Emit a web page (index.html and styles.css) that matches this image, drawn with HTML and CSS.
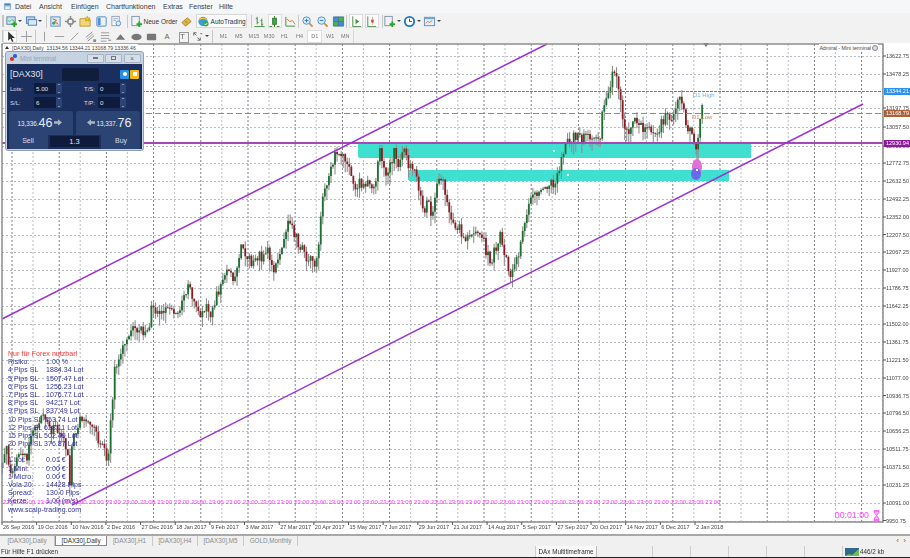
FILE: index.html
```html
<!DOCTYPE html>
<html lang="de">
<head>
<meta charset="utf-8">
<title>MetaTrader 4 - DAX30,Daily</title>
<link rel="stylesheet" href="styles.css">
</head>
<body>
<div class="app">
  <nav class="menu">
    <svg class="appicon" viewBox="0 0 10 10"><rect x="1" y="1" width="8" height="8" rx="1.5" fill="#8fb4dc"/><rect x="2.5" y="5" width="5" height="3" fill="#e8f0f8"/><rect x="2" y="2" width="6" height="1.5" fill="#4d7fb8"/></svg>
    <span class="m1">Datei</span><span class="m2">Ansicht</span><span class="m3">Einfügen</span><span class="m4">Chartfunktionen</span><span class="m5">Extras</span><span class="m6">Fenster</span><span class="m7">Hilfe</span>
  </nav>

  <div class="toolbar row1">
    <i class="grip"></i>
    <span class="ic"><svg viewBox="0 0 14 14"><rect x="2" y="2" width="9" height="8" fill="#cfe0f0" stroke="#5a82ad"/><path d="M3 6l2 1 2-2 3 1" stroke="#4b7" fill="none"/><path d="M9 7h2v2h2v2h-2v2H9v-2H7V9h2z" fill="#2da52d"/></svg></span><span class="dd"></span>
    <span class="ic"><svg viewBox="0 0 14 14"><rect x="1.500" y="2" width="9" height="7" fill="#bcd4ee" stroke="#4f7fb5"/><rect x="3.500" y="5" width="9" height="6" fill="#d9e7f6" stroke="#4f7fb5"/></svg></span><span class="dd"></span>
    <i class="sep sa"></i>
    <div class="grp">
      <span class="ic"><svg viewBox="0 0 14 14"><rect x="2" y="2" width="10" height="10" fill="#d7e9f7" stroke="#5d8fc0"/><path d="M4 4l4 2-2 1 4 3" stroke="#d8452a" fill="none"/><circle cx="5" cy="9" r="1.600" fill="#43a047"/></svg></span>
      <span class="ic"><svg viewBox="0 0 14 14"><circle cx="7" cy="7" r="3" fill="none" stroke="#8a8a8a" stroke-width="1.600"/><path d="M7 1v4M7 9v4M1 7h4M9 7h4" stroke="#8a8a8a" stroke-width="1.600"/></svg></span>
      <span class="ic"><svg viewBox="0 0 14 14"><path d="M1 4h5l1 1h5v7H1z" fill="#f2d77a" stroke="#b89a3a"/><path d="M9 1l1 2 2 .3-1.500 1.400.4 2.100L9 5.800 7.100 6.800l.4-2.100L6 3.300 8 3z" fill="#f4c020" stroke="#b08a20" stroke-width=".5"/></svg></span>
      <span class="ic"><svg viewBox="0 0 14 14"><rect x="2" y="2" width="10" height="10" rx="1" fill="#eaf2fa" stroke="#4f86c0"/><rect x="3" y="3" width="3" height="8" fill="#4f8fd0"/></svg></span>
      <span class="ic"><svg viewBox="0 0 14 14"><rect x="2" y="1.500" width="8" height="10" fill="#f5f7fa" stroke="#8da2b8"/><path d="M3.500 4h5M3.500 6h3" stroke="#9ab"/><circle cx="9" cy="9" r="2.500" fill="#dcecf8" stroke="#5d8fc0"/></svg></span>
    </div>
    <i class="sep sb"></i>
    <button class="tbtn neworder"><svg viewBox="0 0 14 14"><rect x="2" y="1.500" width="8" height="10" fill="#eef3f8" stroke="#7c93ab"/><path d="M9 7h2v2h2v2h-2v2H9v-2H7V9h2z" fill="#2da52d"/></svg><span>Neue Order</span></button>
    <span class="ic"><svg viewBox="0 0 14 14"><path d="M2 8l6-5 4 4-6 5z" fill="#e6b23a" stroke="#9c7420" stroke-width=".8"/><path d="M5 6l3 3" stroke="#a87d22"/></svg></span>
    <button class="tbtn auto"><svg viewBox="0 0 14 14"><circle cx="6.500" cy="7" r="5" fill="#3e9ad6"/><path d="M2.500 5c2-2 6-2 8 0" stroke="#f1c232" stroke-width="1.600" fill="none"/><circle cx="9.500" cy="9.500" r="3" fill="#34a853"/><path d="M8 9.500l1.200 1.200L11 8.700" stroke="#fff" fill="none"/></svg><span>AutoTrading</span></button>
    <i class="sep sc"></i>
    <div class="grp">
      <span class="ic"><svg viewBox="0 0 14 14"><path d="M4.500 2v8M3 4h1.500M4.500 8H6M9.500 4v8M8 6h1.500M9.500 10H11M1.500 12.500h11" stroke="#3f8a3f" fill="none"/></svg></span>
      <span class="ic on"><svg viewBox="0 0 14 14"><path d="M7 1v12" stroke="#2f7d2f"/><rect x="5" y="3.500" width="4" height="6.500" fill="#4aa84a" stroke="#2f7d2f"/><path d="M1.500 12.500h3M9.500 12.500h3" stroke="#2f7d2f"/></svg></span>
      <span class="ic"><svg viewBox="0 0 14 14"><path d="M2 2v10h10" stroke="#3f8a3f" fill="none"/><path d="M3 4l3 3 3-1 3 4" stroke="#c77a3a" fill="none"/></svg></span>
    </div>
    <i class="sep sd"></i>
    <div class="grp">
      <span class="ic"><svg viewBox="0 0 14 14"><circle cx="6" cy="6" r="4" fill="#d6ecfa" stroke="#4f8fc8"/><path d="M9 9l3.500 3.500" stroke="#c49a2e" stroke-width="2"/><path d="M4 6h4M6 4v4" stroke="#2f76b8"/></svg></span>
      <span class="ic"><svg viewBox="0 0 14 14"><circle cx="6" cy="6" r="4" fill="#d6ecfa" stroke="#4f8fc8"/><path d="M9 9l3.500 3.500" stroke="#c49a2e" stroke-width="2"/><path d="M4 6h4" stroke="#2f76b8"/></svg></span>
      <span class="ic"><svg viewBox="0 0 14 14"><rect x="1.500" y="2" width="5.500" height="5" fill="#3f8fd0"/><rect x="7" y="2" width="5.500" height="5" fill="#4caf50"/><rect x="1.500" y="7" width="5.500" height="5" fill="#4caf50"/><rect x="7" y="7" width="5.500" height="5" fill="#3f8fd0"/><path d="M1.500 2h11v10h-11zM1.500 7h11M7 2v10" stroke="#2e5e8c" stroke-width=".7" fill="none"/></svg></span>
    </div>
    <i class="sep se"></i>
    <div class="grp">
      <span class="ic on"><svg viewBox="0 0 14 14"><path d="M3 1.500v11h9" stroke="#3f8a3f" fill="none"/><path d="M6 4l4 3-4 3z" fill="#3f9a3f"/></svg></span>
      <span class="ic on"><svg viewBox="0 0 14 14"><path d="M3 1.500v11h9" stroke="#3f8a3f" fill="none"/><path d="M8 2.500v8" stroke="#d9534f" stroke-dasharray="1.500 1"/><rect x="6.500" y="5" width="3" height="3" fill="#d9534f"/></svg></span>
    </div>
    <i class="sep sf"></i>
    <span class="ic"><svg viewBox="0 0 14 14"><rect x="2" y="1.500" width="8" height="10" fill="#eef3f8" stroke="#7c93ab"/><path d="M9 7h2v2h2v2h-2v2H9v-2H7V9h2z" fill="#2da52d"/></svg></span><span class="dd"></span>
    <span class="ic"><svg viewBox="0 0 14 14"><circle cx="7" cy="7" r="5" fill="#fff" stroke="#1f78c8" stroke-width="2"/><path d="M7 4v3h2.500" stroke="#1a4f80" fill="none"/></svg></span><span class="dd"></span>
    <span class="ic"><svg viewBox="0 0 14 14"><rect x="1.500" y="2.500" width="11" height="9" fill="#e4eef8" stroke="#5d8fc0"/><rect x="1.500" y="2.500" width="11" height="2" fill="#6fa5d8"/><path d="M3 9l2-2 2 1 3-2" stroke="#d8703a" fill="none"/></svg></span><span class="dd"></span>
  </div>

  <div class="toolbar row2">
    <i class="grip"></i>
    <span class="ic on"><svg viewBox="0 0 14 14"><path d="M4.500 1.500v10l2.500-2.300 1.700 3.600 1.500-.7-1.700-3.500h3.300z" fill="#333"/></svg></span>
    <span class="ic"><svg viewBox="0 0 14 14"><path d="M7 1v12M1 7h12" stroke="#999"/></svg></span>
    <i class="sep sg"></i>
    <div class="grp">
      <span class="ic"><svg viewBox="0 0 14 14"><path d="M7 2v10" stroke="#999"/></svg></span>
      <span class="ic"><svg viewBox="0 0 14 14"><path d="M2 7h10" stroke="#999"/></svg></span>
      <span class="ic"><svg viewBox="0 0 14 14"><path d="M3 11l8-8" stroke="#999"/></svg></span>
      <span class="ic"><svg viewBox="0 0 14 14"><path d="M2 8l7-6M4 12l7-6" stroke="#888"/><path d="M3 10l7-6" stroke="#aaa"/><path d="M10 10h3v3h-3z" fill="#888"/></svg></span>
      <span class="ic"><svg viewBox="0 0 14 14"><path d="M2 3h9M2 6h9M2 9h9M2 12h6" stroke="#999"/><path d="M10 11h3" stroke="#777"/></svg></span>
      <span class="ic"><svg viewBox="0 0 14 14"><path d="M2 10.500L7 4.500l5 6z" fill="#777"/></svg></span>
      <span class="ic"><svg viewBox="0 0 14 14"><ellipse cx="7" cy="7.500" rx="5.500" ry="3.500" fill="#777"/></svg></span>
      <span class="ic"><svg viewBox="0 0 14 14"><rect x="2" y="4" width="10" height="7" rx="1" fill="#777"/></svg></span>
      <span class="ic txt">A</span>
      <span class="ic txt boxed">T</span>
      <span class="ic"><svg viewBox="0 0 14 14"><path d="M3 3l3 3M3 6V3h3" stroke="#666" fill="none"/><path d="M7 8l3 3M10 8v3H7" stroke="#666" fill="none"/><path d="M10 4h2" stroke="#666"/></svg></span>
    </div>
    <span class="dd"></span>
    <i class="sep sh"></i>
    <div class="tfs">
      <span>M1</span><span>M5</span><span>M15</span><span>M30</span><span>H1</span><span>H4</span><span class="tf-on">D1</span><span>W1</span><span>MN</span>
    </div>
  </div>

  <main class="chart">
    <svg id="plot" class="plot" viewBox="0 43 910 491" width="910" height="491"></svg>

    <div class="chart-title"><span class="tri"></span>[DAX30],Daily&nbsp; 13134.56 13344.21 13168.79 13336.46</div>
    <div class="chart-brand">Admiral - Mini terminal <span class="ring"></span></div>

    <section class="mini">
      <header class="mini-title">
        <span class="dots"><i class="dot-r"></i><i class="dot-b"></i></span>
        <span class="mini-name">Mini terminal</span>
        <span class="wbtn"><i class="w-min"></i></span><span class="wbtn"><i class="w-max"></i></span><span class="wbtn"><i class="w-x">×</i></span>
      </header>
      <div class="mini-body">
        <div class="mini-head">
          <span class="sym">[DAX30]</span>
          <span class="symbox"></span>
          <span class="sq sq-b"><i></i></span><span class="sq sq-y"><i></i></span>
        </div>
        <div class="fields">
          <label>Lots:</label><span class="inp">5.00</span><span class="stp"></span>
          <label class="l2">T/S:</label><span class="inp">0</span><span class="stp"></span>
          <label>S/L:</label><span class="inp">6</span><span class="stp"></span>
          <label class="l2">T/P:</label><span class="inp">0</span><span class="stp"></span>
        </div>
        <div class="trade">
          <div class="side sell">
            <div class="price"><small>13,336.</small><b>46</b><svg viewBox="0 0 10 8"><path d="M0 2.500h5V0l5 4-5 4V5.500H0z"/></svg></div>
            <div class="act">Sell</div>
          </div>
          <div class="side buy">
            <div class="price"><svg viewBox="0 0 10 8"><path d="M10 2.500H5V0L0 4l5 4V5.500h5z"/></svg><small>13,337.</small><b>76</b></div>
            <div class="act">Buy</div>
          </div>
          <div class="spread">1.3</div>
        </div>
      </div>
    </section>

    <div class="info">
      <p class="warn">Nur für Forex nutzbar!</p>
      <p><span>Risiko:</span>1.00 %</p>
      <p><span>4 Pips SL</span>1884.34 Lot</p>
      <p><span>5 Pips SL</span>1507.47 Lot</p>
      <p><span>6 Pips SL</span>1256.23 Lot</p>
      <p><span>7 Pips SL</span>1076.77 Lot</p>
      <p><span>8 Pips SL</span>942.17 Lot</p>
      <p><span>9 Pips SL</span>837.49 Lot</p>
      <p class="wide"><span>10 Pips SL</span>753.74 Lot</p>
      <p class="wide"><span>12 Pips SL</span>628.11 Lot</p>
      <p class="wide"><span>15 Pips SL</span>502.49 Lot</p>
      <p class="wide gapb"><span>20 Pips SL</span>376.87 Lot</p>
      <p><span>1 Lot:</span>0.01 €</p>
      <p><span>1 Mini:</span>0.00 €</p>
      <p><span>1 Micro:</span>0.00 €</p>
      <p><span>Vola 20:</span>14428 Pips</p>
      <p><span>Spread:</span>130.0 Pips</p>
      <p><span>Kerze:</span>1.00 (m/s)</p>
      <p class="url">www.scalp-trading.com</p>
    </div>

    <div class="timer">00:01:00<svg viewBox="0 0 8 12"><path d="M1 .5h6M1 11.500h6M1.500 1c0 3 2 4 2.500 5 .5 1 2.500 2 2.500 5h-5c0-3 2-4 2.500-5C4.500 5 6.500 4 6.500 1z" fill="#ffb4ff" stroke="#ff40ff"/></svg></div>
  </main>

  <div class="tabs">
    <span class="tab t1">[DAX30],Daily</span>
    <span class="tab t2 active">[DAX30],Daily</span>
    <span class="tab t3">[DAX30],H1</span>
    <span class="tab t4">[DAX30],H4</span>
    <span class="tab t5">[DAX30],M5</span>
    <span class="tab t6">GOLD,Monthly</span>
    <span class="arrows">‹&nbsp;&nbsp;›</span>
  </div>

  <footer class="status">
    <span class="s-help">Für Hilfe F1 drücken</span>
    <span class="s-cell s-name">DAx Multitimeframe</span>
    <span class="s-cell s-a"></span><span class="s-cell s-b"></span><span class="s-cell s-b"></span><span class="s-cell s-b"></span><span class="s-cell s-b"></span><span class="s-cell s-b"></span>
    <span class="s-conn"><svg viewBox="0 0 14 8"><rect width="14" height="8" fill="#2d6a8e"/><path d="M0 8l4-2 3 1 7-6v7z" fill="#6fbf4a"/></svg>446/2 kb</span>
  </footer>
</div>
<script src="chart.js"></script>
</body>
</html>
```
FILE: styles.css
```css
* { box-sizing: border-box; }
html, body { margin: 0; padding: 0; }
body { width: 910px; height: 558px; overflow: hidden; background: #f0f0f0; font-family: "Liberation Sans", Arial, sans-serif; color: #333; }
.app { display: flex; flex-direction: column; width: 910px; height: 558px; filter: blur(.3px); }

.menu { height: 13px; background: #f6f7f8; display: flex; align-items: center; font-size: 7px; color: #3c3c3c; padding-left: 3px; }
.appicon { width: 9px; height: 9px; }
.menu span { display: block; }
.m1 { margin-left: 3px; width: 24px; }
.m2 { width: 32px; }
.m3 { width: 35px; }
.m4 { width: 57px; }
.m5 { width: 26px; }
.m6 { width: 30px; }

.toolbar { display: flex; align-items: center; background: #f2f2f2; padding-left: 2px; }
.row1 { height: 16px; }
.row2 { height: 14px; }
.grip { width: 2px; height: 12px; background: #c4c4c4; display: block; }
.row2 .grip { margin-right: -1px; }
.grp { display: flex; gap: 1.400px; }
.ic { width: 14px; height: 14px; display: flex; align-items: center; justify-content: center; flex: none; }
.ic svg { width: 13px; height: 13px; display: block; }
.ic.on { background: #fbfbfb; outline: 1px solid #dcdcdc; outline-offset: -1px; }
.row2 .ic { height: 13px; }
.row2 .ic + .ic { margin-left: 2px; }
.row2 .grp .ic + .ic { margin-left: 0; }
.txt { font-size: 7.500px; color: #666; }
.boxed { position: relative; }
.boxed::before { content: ""; position: absolute; left: 3px; top: 2px; width: 8px; height: 9px; border: 1px solid #999; }
.dd { width: 6px; height: 14px; flex: none; position: relative; }
.dd::after { content: ""; position: absolute; left: 0; top: 6px; border: 2px solid transparent; border-top: 2px solid #444; }
.sep { display: block; width: 1px; height: 13px; background: #c8c8c8; flex: none; }
.sa { margin: 0 1px 0 2px; }
.sb { margin: 0 2px 0 3px; }
.sc { margin: 0 1px 0 4px; }
.sd { margin: 0 1px; }
.se { margin: 0 2px 0 1px; }
.sf { margin: 0 0 0 3px; }
.sg { margin: 0 1.500px; }
.sh { margin: 0 3px 0 1px; }
.tbtn { height: 14px; padding: 0; margin: 0; border: 0; background: none; display: flex; align-items: center; font: 6.500px "Liberation Sans", Arial, sans-serif; color: #333; flex: none; white-space: nowrap; }
.tbtn svg { width: 13px; height: 13px; flex: none; margin-right: 1px; }
.neworder { width: 50px; }
.auto { width: 51px; margin-left: 2px; background: #fafafa; border: 1px solid #d8d8d8; }
.tfs { display: flex; height: 13px; width: 138px; border-right: 1px solid #d8d8d8; }
.tfs span { width: 15.300px; font-size: 5.500px; color: #777; display: flex; align-items: center; justify-content: center; }
.tfs .tf-on { background: #fff; border: 1px solid #dedede; }

.chart { position: relative; height: 491px; flex: none; background: #fff; overflow: hidden; }
.plot { display: block; }
.grid-h { stroke: #b4bac0; stroke-width: 1; stroke-dasharray: 2 2; }
.grid-v { stroke: #b8bcc0; stroke-width: 1; stroke-dasharray: 2 2; }
.grid-v.dark { stroke: #7a7f84; }
.frame { fill: none; stroke: #8c8c8c; stroke-width: 1.500; }
.tick { stroke: #555; stroke-width: 1; }
.ax { font: 5.500px "Liberation Sans", Arial, sans-serif; fill: #444; }
.tag { font: 5.500px "Liberation Sans", Arial, sans-serif; fill: #fff; }
.t23 { font: 6px "Liberation Sans", Arial, sans-serif; fill: #ff3cff; }
.lv { font: 6px "Liberation Sans", Arial, sans-serif; }
.lv-hi { fill: #6fb0ea; }
.lv-lo { fill: #c08a68; }
.wick { stroke: #8f8f8f; stroke-width: 1.100; }
.up { fill: #1c7030; }
.dn { fill: #8c1c24; }
.zone { fill: #40e0d0; }
.handle { fill: #fff; }
.hline { stroke: #a447b8; stroke-width: 2; }
.channel { stroke: #9a32d8; stroke-width: 1.500; }
.hi-line { stroke: #3d86c8; stroke-width: 1.200; stroke-dasharray: 3 1; }
.lo-line { stroke: #bd7d5e; stroke-width: 1; stroke-dasharray: 6 3; }
.pink { fill: #e070d8; }
.blue { fill: #6a6ae8; }
.mark { fill: #777; }

.chart-title { position: absolute; left: 3px; top: 1px; font-size: 5.100px; color: #444; line-height: 8px; background: #fff; white-space: nowrap; padding-right: 2px; }
.tri { display: inline-block; border: 2px solid transparent; border-bottom: 3px solid #333; border-top: 0; margin: 0 3px 1px 2px; }
.chart-brand { position: absolute; right: 32px; top: 1px; font-size: 5.200px; color: #444; line-height: 8px; background: #fff; white-space: nowrap; display: flex; gap: 1px; align-items: center; }
.ring { width: 6px; height: 6px; border: 1px solid #888; border-radius: 50%; background: #ddd; }

.mini { position: absolute; left: 5px; top: 8px; width: 139px; height: 100px; background: #c6d3e2; border: 1px solid #8fa0b4; border-radius: 3px; padding: 0 1px 1px 1px; display: flex; flex-direction: column; }
.mini-title { height: 12px; display: flex; align-items: center; flex: none; font-size: 6.400px; color: #9aa3ad; }
.dots { width: 7px; height: 8px; position: relative; margin: 0 3px 0 3px; }
.dots i { position: absolute; border-radius: 50%; width: 3.500px; height: 3.500px; }
.dot-r { left: 0; top: 3px; background: #e0302a; }
.dot-b { left: 3px; top: 0; background: #2a5fd8; }
.mini-name { flex: 1; }
.wbtn { width: 17px; height: 9px; margin-right: 1.500px; border: 1px solid #a8b4c2; border-radius: 1px; background: #d6dfe9; display: flex; align-items: center; justify-content: center; }
.wbtn i { font-style: normal; font-size: 7px; line-height: 7px; color: #666; }
.w-min { width: 5px; height: 2px; border: 1px solid #777; }
.w-max { width: 5px; height: 4px; border: 1px solid #777; }
.mini-body { flex: 1; background: #1b2f5e; color: #d6deea; padding: 3px 2px 0 2px; display: flex; flex-direction: column; }
.mini-head { display: flex; align-items: center; height: 14px; }
.sym { width: 53px; font-size: 8.800px; padding-left: 1px; color: #dce4ee; }
.symbox { width: 37px; height: 13px; background: #111d3d; border-radius: 2px; margin-right: 20px; }
.sq { width: 9px; height: 9px; border-radius: 1px; margin-left: 1px; display: flex; align-items: center; justify-content: center; }
.sq i { width: 4px; height: 4px; background: #fff; border-radius: 50%; display: block; }
.sq-b { background: #2a8fe8; }
.sq-y { background: #f5b90f; }
.sq-y i { border-radius: 0; }
.fields { display: grid; grid-template-columns: 24px 22px 6px 36px 22px 6px; grid-auto-rows: 11px; row-gap: 3px; margin-top: 2px; align-items: center; font-size: 6px; padding-left: 1px; }
.l2 { padding-left: 22px; }
.inp { height: 11px; background: #0f1b3c; color: #dfe6ef; font-size: 6.200px; line-height: 11px; padding-left: 2px; border-radius: 1px; }
.stp { height: 11px; background: #2c4473; position: relative; border-radius: 1px; }
.stp::before, .stp::after { content: ""; position: absolute; left: 1.500px; border: 1.500px solid transparent; }
.stp::before { top: 0; border-bottom-color: #cfd8e6; }
.stp::after { bottom: 0; border-top-color: #cfd8e6; }
.trade { position: relative; display: flex; gap: 3px; margin-top: 3px; flex: 1; }
.side { flex: 1; background: #2c4473; border-radius: 3px 3px 2px 2px; display: flex; flex-direction: column; }
.price { height: 23px; display: flex; align-items: center; justify-content: center; color: #e6ecf4; }
.price small { font-size: 6.300px; padding-top: 2px; }
.price b { font-weight: normal; font-size: 12.500px; }
.price svg { width: 8px; height: 7px; fill: #aab4c4; margin: 0 2px; flex: none; }
.act { width: 38px; flex: 1; text-align: center; font-size: 7px; line-height: 13px; color: #d6deea; }
.buy .act { align-self: flex-end; }
.spread { position: absolute; left: 39px; right: 39px; bottom: 0; height: 14px; background: #1b2f5e; color: #e0e6ee; font-size: 7.500px; text-align: center; line-height: 14px; isolation: isolate; }
.spread::before { content: ""; position: absolute; inset: 1px 2px 2px; background: #0f1b3c; z-index: -1; }

.info { position: absolute; left: 8px; top: 307px; font-size: 7px; line-height: 8.200px; letter-spacing: .05px; color: #2f2fa0; }
.info p { margin: 0; display: flex; white-space: nowrap; }
.info p span { width: 38px; flex: none; }
.info .wide span { width: 36px; }
.info .gapb { margin-bottom: 8px; }
.info .warn { color: #ff3030; }

.timer { position: absolute; right: 30px; top: 466px; display: flex; align-items: center; gap: 4px; color: #ff48ff; font-size: 8.800px; line-height: 12px; }
.timer svg { width: 7px; height: 11px; }

.tabs { height: 12px; flex: none; background: #f0f0f0; border-top: 2px solid #a8a8a8; position: relative; display: flex; align-items: flex-end; font-size: 6.300px; color: #8a8a8a; }
.tab { height: 10px; line-height: 10px; text-align: center; flex: none; border-right: 1px solid #c8c8c8; }
.t1 { width: 55px; }
.t2 { width: 52px; color: #333; background: #fff; border: 1px solid #888; border-top: 0; }
.t3 { width: 46px; }
.t4 { width: 45px; }
.t5 { width: 46px; }
.t6 { width: 54px; }
.arrows { margin-left: auto; margin-right: 4px; color: #666; font-size: 8px; line-height: 10px; }

.status { height: 12px; flex: none; background: #f0f0f0; border-bottom: 1px solid #222; display: flex; align-items: stretch; font-size: 6.300px; line-height: 11px; color: #333; }
.s-help { width: 535px; padding-left: 1px; white-space: nowrap; }
.s-cell { border-left: 1px solid #cfcfcf; text-align: center; flex: none; white-space: nowrap; }
.s-name { width: 62px; border-right: 1px solid #bbb; background: #f8f8f8; }
.s-a { width: 55px; border-left: 0; }
.s-b { width: 38px; }
.s-conn { flex: 1; border-left: 1px solid #cfcfcf; display: flex; align-items: center; gap: 1px; padding-left: 2px; }
.s-conn svg { width: 14px; height: 8px; flex: none; }
```
FILE: chart.js
```js
(function () {
  var NS = 'http://www.w3.org/2000/svg';
  var svg = document.getElementById('plot');
  function el(name, attrs, text) {
    var e = document.createElementNS(NS, name);
    for (var k in attrs) e.setAttribute(k, attrs[k]);
    if (text) e.textContent = text;
    svg.appendChild(e);
    return e;
  }
  var RIGHT = 883, TOP = 44, BOTTOM = 522, LEFT = 2;

  // vertical grid
  var gx = 12, n = 0;
  while (gx < RIGHT) {
    el('line', { x1: gx, x2: gx, y1: TOP, y2: BOTTOM, 'class': 'grid-v' + (n % 2 === 0 ? ' dark' : '') });
    gx += n % 2 === 0 ? 21 : 26.2;
    n++;
  }

  // price axis
  var prices = [[56,'13622.75'],[74,'13478.25'],[108,'13197.75'],[127,'13057.50'],[146,'12913.00'],[163,'12772.75'],[181,'12632.50'],[199,'12492.25'],[217,'12352.00'],[234.5,'12207.50'],[252,'12067.25'],[270,'11927.00'],[288,'11786.75'],[306,'11642.25'],[324,'11502.00'],[342,'11361.75'],[360,'11221.50'],[378,'11077.00'],[395.5,'10936.75'],[413,'10796.50'],[431,'10656.25'],[449,'10511.75'],[467,'10371.50'],[485,'10231.25'],[503,'10091.00'],[520.5,'9950.75']];
  prices.forEach(function (p) {
    el('line', { x1: LEFT, x2: RIGHT, y1: Math.round(p[0]) + 0.5, y2: Math.round(p[0]) + 0.5, 'class': 'grid-h' });
  });

  // zones
  el('rect', { x: 358, y: 144, width: 393, height: 14, 'class': 'zone' });
  el('rect', { x: 408, y: 170, width: 321, height: 11, 'class': 'zone' });

  // candles: close path traced from the chart
  var path = [[2,468],[6,442],[10,470],[16,462],[22,448],[27,460],[31,432],[38,428],[44,414],[50,432],[56,424],[62,440],[67,447],[70,490],[72,446],[77,424],[84,416],[92,424],[98,438],[104,450],[108,460],[111,420],[115,368],[120,355],[125,340],[130,332],[140,330],[148,335],[152,306],[160,312],[170,311],[178,316],[184,300],[188,284],[194,298],[200,312],[206,306],[212,316],[216,292],[222,288],[228,264],[235,282],[241,246],[250,262],[258,256],[264,258],[268,250],[274,268],[280,250],[285,232],[290,222],[297,240],[305,256],[315,265],[318,258],[322,205],[328,180],[335,156],[340,153],[347,158],[355,188],[360,183],[370,185],[375,182],[380,153],[384,172],[390,167],[395,150],[398,163],[403,150],[408,163],[415,173],[420,197],[423,210],[428,203],[432,217],[438,180],[443,180],[447,200],[453,227],[460,230],[470,240],[480,230],[490,263],[500,236],[510,272],[515,268],[520,246],[525,227],[530,200],[537,192],[545,190],[550,183],[553,187],[558,173],[562,157],[565,143],[573,138],[580,138],[590,137],[600,137],[602,113],[604,105],[607,92],[612,78],[615,72],[620,92],[622,117],[628,133],[634,122],[638,120],[642,130],[650,127],[655,137],[662,122],[668,113],[673,120],[678,94],[682,107],[687,127],[693,137],[697,150],[700,120],[704,93]];
  function closeAt(x) {
    for (var i = 1; i < path.length; i++) {
      if (x <= path[i][0]) {
        var a = path[i - 1], b = path[i];
        return a[1] + (b[1] - a[1]) * (x - a[0]) / (b[0] - a[0]);
      }
    }
    return path[path.length - 1][1];
  }
  var seed = 20171231;
  function rnd() { seed = (seed * 16807) % 2147483647; return (seed & 0xffff) / 65536; }
  var prev = closeAt(2), step = 2.04, x = 2.5;
  while (x <= 704) {
    var base = closeAt(x);
    var close = x > 700 ? base : base + (rnd() - 0.5) * 11;
    var open = prev;
    var hi = Math.min(open, close) - rnd() * 7;
    var lo = Math.max(open, close) + rnd() * 12;
    el('line', { x1: x, x2: x, y1: hi, y2: lo, 'class': 'wick' });
    var top = Math.min(open, close), h = Math.max(Math.abs(open - close), 1);
    el('rect', { x: x - 0.9, y: top, width: 1.8, height: h, 'class': close <= open ? 'up' : 'dn' });
    prev = close;
    x += step;
  }
  el('line', { x1: 697, x2: 697, y1: 150, y2: 176, 'class': 'wick' });

  // drawn levels and channels
  el('line', { x1: LEFT, x2: RIGHT, y1: 91.5, y2: 91.5, 'class': 'hi-line' });
  el('line', { x1: LEFT, x2: RIGHT, y1: 113.5, y2: 113.5, 'class': 'lo-line' });
  el('line', { x1: LEFT, x2: RIGHT, y1: 143, y2: 143, 'class': 'hline' });
  el('line', { x1: 2, y1: 319, x2: 547, y2: 44, 'class': 'channel' });
  el('line', { x1: 72, y1: 505, x2: 863, y2: 104, 'class': 'channel' });
  el('ellipse', { cx: 697, cy: 167, rx: 5, ry: 8, 'class': 'pink' });
  el('ellipse', { cx: 696, cy: 174, rx: 5, ry: 6, 'class': 'blue' });
  [[554,151],[568,175],[697,170],[358,158],[408,181]].forEach(function (p) {
    el('rect', { x: p[0] - 1, y: p[1] - 1, width: 2, height: 2, 'class': 'handle' });
  });
  el('path', { d: 'M703 43h6l-3 4z', 'class': 'mark' });
  el('text', { x: 693, y: 97, 'class': 'lv lv-hi' }, 'D1 High');
  el('text', { x: 692, y: 119, 'class': 'lv lv-lo' }, 'D1 Low');

  // repeated session labels
  for (var t = 0; t < 42; t++) {
    el('text', { x: 3 + t * 17.13, y: 503.5, 'class': 't23' }, '23:00');
  }

  // frame and axes
  el('rect', { x: LEFT, y: TOP, width: RIGHT - LEFT, height: BOTTOM - TOP, 'class': 'frame' });
  prices.forEach(function (p) {
    el('line', { x1: RIGHT, x2: RIGHT + 3, y1: p[0], y2: p[0], 'class': 'tick' });
    el('text', { x: 886, y: p[0] + 2, 'class': 'ax' }, p[1]);
  });
  [[88,'#2b90f0','13344.21'],[110,'#a8623c','13168.79'],[140,'#8a1a9a','12930.94']].forEach(function (g) {
    var r = el('rect', { x: 884, y: g[0], width: 26, height: 7 });
    r.style.fill = g[1];
    el('text', { x: 886, y: g[0] + 5.4, 'class': 'tag' }, g[2]);
  });

  var dates = ['26 Sep 2016','19 Oct 2016','10 Nov 2016','2 Dec 2016','27 Dec 2016','18 Jan 2017','9 Feb 2017','3 Mar 2017','27 Mar 2017','20 Apr 2017','15 May 2017','7 Jun 2017','29 Jun 2017','21 Jul 2017','14 Aug 2017','5 Sep 2017','27 Sep 2017','20 Oct 2017','14 Nov 2017','6 Dec 2017','2 Jan 2018'];
  dates.forEach(function (d, i) {
    var dx = 2 + i * 34.65;
    el('line', { x1: dx, x2: dx, y1: BOTTOM, y2: BOTTOM + 3, 'class': 'tick' });
    el('text', { x: dx + 1, y: 529, 'class': 'ax' }, d);
  });
})();
```
